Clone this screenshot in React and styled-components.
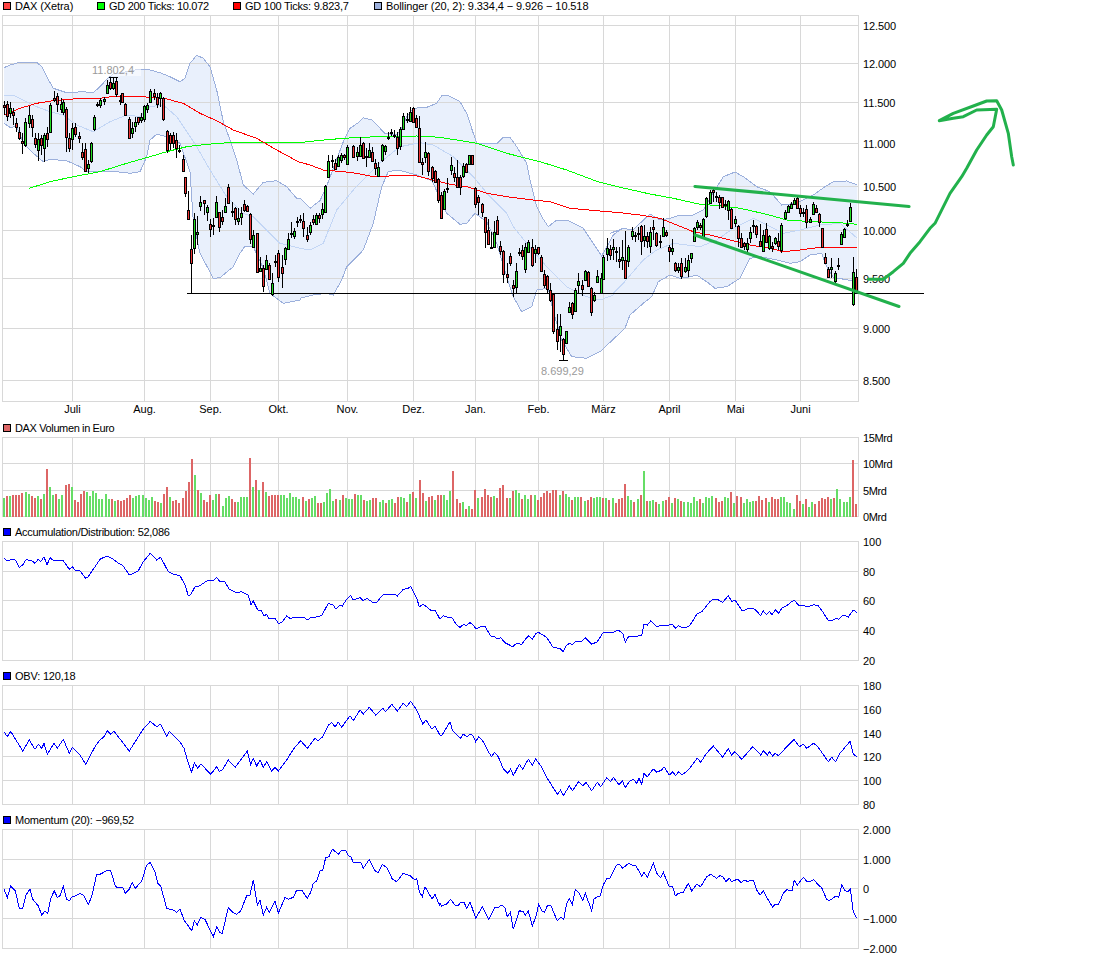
import React from "react";
import styled, { createGlobalStyle } from "styled-components";

const Global = createGlobalStyle`
  html, body { margin: 0; padding: 0; background: #fff; }
  #root { width: 1095px; height: 958px; overflow: hidden; }
`;

const FONT = `"Liberation Sans", Arial, sans-serif`;
const Page = styled.main`display:flex;flex-direction:column;width:1095px;height:958px;background:#fff;font-family:${FONT};color:#000;`;
const Panel = styled.section`display:flex;flex-direction:column;flex:none;`;
const LegendRow = styled.header`display:flex;align-items:center;height:12px;padding:0 0 3px 3px;`;
const LegendItem = styled.div`display:flex;align-items:center;gap:4px;flex:none;width:${p => (p.$w ? p.$w + "px" : "auto")};font-size:11px;line-height:12px;white-space:nowrap;letter-spacing:${p => p.$ls || 0}px;`;
const Swatch = styled.span`display:block;width:6px;height:6px;border:1px solid #000;background:${p => p.$c};flex:none;`;
const Chart = styled.svg`display:block;flex:none;overflow:visible;`;
const Tick = styled.text`font-family:${FONT};font-size:11px;fill:#000;dominant-baseline:central;`;
const Note = styled.text`font-family:${FONT};font-size:11px;fill:#9a9a9a;`;

const GRID = "#d8d8d8";
const PLOT_L = 2, PLOT_R = 858;
const VX = [72, 144, 210, 278, 347, 413, 475, 538, 603, 669, 735, 800];
const MONTHS = ["Juli", "Aug.", "Sep.", "Okt.", "Nov.", "Dez.", "Jan.", "Feb.", "März", "April", "Mai", "Juni"];

const pts = (ox, oy, s) => s.trim().split(/\s+/).map(p => { const [x, y] = p.split(",").map(Number); return [ox + x / 3, oy + y / 3]; });
const str = a => a.map(([x, y]) => `${x.toFixed(1)},${y.toFixed(1)}`).join(" ");

function Grid({ ys, top, bottom }) {
  return (
    <g shapeRendering="crispEdges" stroke={GRID} strokeWidth="1" fill="none">
      {ys.map(y => <line key={y} x1={PLOT_L} x2={PLOT_R + 1} y1={y + 0.5} y2={y + 0.5} />)}
      {[PLOT_L, ...VX, PLOT_R].map(x => <line key={x} x1={x + 0.5} x2={x + 0.5} y1={top} y2={bottom + 1} />)}
    </g>
  );
}
function Ticks({ items, x = 863, ls = 0 }) {
  return items.map(([t, y]) => <Tick key={t} x={x} y={y + 0.5} letterSpacing={ls}>{t}</Tick>);
}

/* ---------- main price data, "x hi top bottom lo colour" ---------- */
const CANDLES = [
  [0, 0, `12 302 316 322 345 r,21 302 313 348 362 r,30 305 325 340 355 g,39 325 337 346 375 r,49 355 370 380 395 r,58 380 397 413 420 r,67 400 424 430 463 r,76 355 365 436 440 g,88 318 345 370 385 g,97 345 358 380 410 r,106 400 415 433 445 r,115 400 418 451 482 g,124 405 415 435 465 r,133 400 405 445 485 g,142 380 400 418 440 r,151 310 315 395 397 g,163 272 295 300 305 r,172 280 288 313 335 r,182 295 312 328 340 g,190 300 307 335 345 g,199 320 328 410 455 r,208 400 415 443 455 r,216 370 385 418 450 g,226 370 382 403 410 r,238 395 409 414 428 r,247 430 457 472 480 r,256 430 448 512 515 r,265 480 492 503 520 g,274 425 430 483 490 g,283 345 350 388 392 g,292 305 311 313 322 r,301 295 300 316 325 g,313 292 296 303 315 g,322 240 255 278 280 g,331 232 247 263 270 r,340 232 250 264 270 g,349 232 243 282 290 r,359 285 300 304 315 r,367 278 280 305 310 r,376 310 313 345 347 r,388 350 358 415 417 r,397 365 385 398 415 g,406 350 367 378 395 g,415 350 352 365 375 r,424 340 352 360 370 g,433 315 318 356 365 g,442 310 316 328 338 g,451 266 274 307 310 g,463 266 280 287 300 r,472 280 292 311 325 r,481 277 280 295 320 g,490 290 295 357 362 r,500 390 392 450 458 r,509 400 405 430 450 r,518 395 405 428 445 r,527 400 420 445 475 r,538 435 449 451 460 r,548 465 476 512 515 r,556 530 532 578 590 r`],
  [0, 180, `565 33 91 118 120 r,574 165 207 250 340 r,583 100 118 205 223 g,592 107 155 163 195 g,601 48 67 79 92 g,613 61 61 70 105 r,622 75 82 97 122 g,631 118 133 148 172 r,640 115 136 138 165 r,649 48 67 110 110 g,658 95 95 142 155 r,667 90 112 124 135 r,676 55 79 97 100 g,685 13 22 70 70 r,697 65 93 95 110 r,706 80 85 118 135 r,715 85 115 122 135 g,724 82 100 110 135 g,733 60 73 91 95 r,742 75 79 92 92 r,751 100 103 176 192 r,760 150 165 200 200 g,772 158 160 275 278 r,781 230 263 272 275 g,790 255 265 317 335 r,799 225 240 268 270 g,808 250 256 298 300 r,817 280 310 341 347 g,826 225 244 246 260 r,835 210 220 292 305 r,847 225 262 280 325 r,856 200 205 238 255 g,865 160 178 207 210 g,874 125 159 161 175 r,883 145 154 168 178 g,892 110 123 125 140 r`],
  [300, 180, `0 105 117 119 130 r,10 100 124 143 170 r,22 140 165 177 185 r,31 125 136 155 165 g,40 105 118 125 135 r,49 100 105 131 133 g,58 100 105 113 130 r,67 70 88 102 118 g,76 15 18 95 100 g`],
  [300, 0, `85 465 482 530 535 g,97 465 481 483 505 r,106 478 490 508 510 r,115 465 472 498 500 g,124 460 465 480 490 g,133 462 465 472 480 r,142 435 440 493 495 g,160 435 438 470 475 r,172 440 457 468 483 g,181 412 435 468 470 g,190 425 430 475 478 r,199 445 468 472 500 r,208 430 451 470 475 g,217 440 455 482 485 r,226 478 490 503 525 r,235 485 502 528 530 g,247 432 436 480 487 g,256 435 438 453 465 g,265 395 411 413 420 r,274 388 397 399 408 r,283 390 404 406 415 r,292 395 412 445 465 r,301 380 388 438 450 g,310 340 348 386 390 g,322 340 356 360 368 g,331 322 335 363 365 g,340 322 325 365 368 r,349 345 353 382 385 r,358 348 385 485 490 r,367 475 487 493 525 r,376 425 457 472 490 g,385 455 460 512 527 r,397 498 500 533 545 r,406 510 512 545 545 r,415 535 538 600 610 r,442 535 564 566 580 r,452 470 496 510 525 g,461 500 520 530 545 r,472 480 530 562 565 r,481 525 532 562 585 r,490 490 498 528 535 g,499 488 492 517 520 r,508 466 466 493 495 g,517 466 466 493 495 r,526 560 563 613 625 r`],
  [300, 180, `424 35 44 115 118 r,433 28 32 88 90 g,535 45 50 67 105 r,547 70 72 95 110 r,556 110 112 157 205 r,565 118 150 193 195 r,574 155 202 204 205 r,583 122 157 200 205 g,592 108 121 163 165 r,601 183 198 212 225 r,610 210 214 281 308 r,622 250 282 290 310 r,631 218 228 248 258 r,640 300 315 325 350 r,649 250 273 322 340 g,658 205 217 219 228 r,667 195 210 228 240 r,676 190 202 266 278 g,685 180 187 215 220 g,697 178 202 255 260 r,706 195 207 218 250 g,715 200 202 220 225 r,724 225 230 272 275 r,733 270 283 314 325 r,742 285 288 328 340 r,751 310 331 360 365 r,760 340 342 452 462 r,772 402 447 482 510 r,781 402 438 465 515 g,790 475 477 521 540 r,799 452 454 490 492 g,808 365 382 395 400 g,817 365 370 403 418 r,826 325 331 392 395 g,835 280 304 316 340 g,847 300 316 328 347 r,856 270 273 301 303 g,865 272 277 319 322 r,874 322 324 395 408 r,883 335 345 360 365 g,892 270 289 307 310 g`],
  [600, 70, `3 610 625 670 672 g,10 555 562 628 630 g,22 504 534 552 574 g,31 525 536 554 570 r,40 508 532 538 570 g,49 530 544 546 575 r,58 530 568 572 595 r,67 510 560 570 600 g,76 482 570 625 625 r,85 525 530 573 590 g,97 470 484 497 510 g,106 485 496 498 515 r,115 470 488 490 510 r,124 465 468 512 555 r,133 465 497 510 530 g,142 485 497 513 535 r,151 470 485 528 550 g,160 450 470 478 510 r,169 485 490 525 530 r,181 495 512 514 535 r,190 445 470 497 500 g,199 480 485 495 500 r,208 525 530 542 575 r,217 508 533 542 555 g,226 575 580 600 605 r,235 580 590 600 610 g,244 565 580 617 628 r,256 565 590 602 610 g,265 555 570 600 620 g,274 548 550 563 580 g,283 470 475 512 515 g,292 450 457 472 480 g,301 460 464 472 480 r,310 445 448 500 500 g,319 380 385 438 445 g,331 360 365 398 400 g,340 350 360 366 395 r,349 365 379 381 395 r,358 375 380 395 418 r,367 380 382 410 415 r,376 390 402 404 420 r,385 390 393 420 450 g,394 415 418 473 475 r,406 437 447 458 470 g,415 465 468 503 530 r,424 490 503 530 535 r,433 515 520 527 540 r,442 505 520 538 545 g,451 470 487 503 520 g,460 450 466 468 490 r,469 465 467 492 505 r,481 462 512 527 530 r,490 480 495 543 545 g,499 460 478 515 520 r,508 495 498 535 540 g,517 515 527 535 545 r,526 500 505 518 525 g,535 490 513 527 540 r,544 460 465 540 548 g,556 420 427 445 450 g,565 405 408 427 428 g,574 397 403 414 415 g,583 385 390 403 405 g,592 382 385 413 415 r,601 405 415 428 440 r,610 415 427 429 440 r,619 405 418 457 473 r,631 440 447 455 458 g,640 395 403 432 435 g,649 405 415 425 430 r,658 430 433 457 470 r,667 475 475 530 535 r,676 550 562 580 582 r,685 590 598 620 622 r,694 565 592 598 625 g,706 603 610 633 640 g,715 565 585 587 600 r,724 485 492 523 525 g,733 475 477 500 503 g,742 450 461 463 470 r,751 398 412 452 455 g,760 562 607 703 707 g,769 597 620 660 670 r`],
];
const candles = CANDLES.flatMap(([ox, oy, s]) => s.split(",").map(r => {
  const [x, h, t, b, l, c] = r.trim().split(" ");
  const Y = v => Math.round(oy + Number(v) / 3);
  return { x: Math.round(ox + Number(x) / 3), h: Y(h), t: Y(t), b: Y(b), l: Y(l), c };
}));

const UPPER = [
  ...pts(0, 0, "12,203 30,195 60,187 110,187 125,200 140,230 160,265 200,278 250,275 280,278 300,260 320,238 340,222 380,215 420,207 450,210 480,218 510,230 540,245 555,235 570,190 590,166 610,175 630,200 650,270 670,365 690,420 710,480 730,555 760,582 790,547 830,542 860,560 890,595"),
  ...pts(300, 180, "0,55 30,85 60,62 75,30 85,5"),
  ...pts(300, 0, "130,425 150,385 175,368 190,353 215,360 240,385 255,400 290,405 305,385 320,350 340,325 380,322 410,310 425,287 445,287 480,305 500,340 520,400 530,430 590,432 610,412 630,412 650,440 680,490 690,540 710,620"),
  ...pts(300, 180, "725,110 745,140 770,120 800,120 850,145 880,190 905,228 940,165 960,150"),
  ...pts(600, 70, "30,490 70,475 100,480 120,460 150,432 180,450 210,445 240,435 280,435 310,420 330,385 370,320 405,306 430,320 470,350 510,365 545,405 590,400 640,375 675,350 700,335 740,333 772,345"),
];
const LOWER = [
  ...pts(0, 0, "12,370 30,382 50,380 70,430 100,460 130,485 150,478 200,482 240,500 260,515 300,515 350,515 390,520 420,515 440,470 450,420 470,403 500,410 540,430 570,515"),
  ...pts(0, 180, "580,125 600,220 640,295 660,293 700,260 720,220 735,198 760,200 790,265 810,340 850,370 900,360"),
  ...pts(300, 180, "0,355 40,345 80,340 100,345 125,300 140,260 190,210 220,130 245,20"),
  ...pts(300, 0, "265,515 295,510 350,525 390,540"),
  ...pts(300, 180, "395,0 440,100 480,133 500,130 525,100 560,125 590,190 620,290 640,350 665,395 695,380 710,330 745,325 760,395 785,480 815,530 860,535 900,515"),
  ...pts(600, 70, "75,775 90,735 130,700 155,680 175,635 210,615 240,625 265,622 290,615 320,635 345,655 380,650 420,625 450,565 480,560 530,570 570,580 600,575 630,555 665,550 680,590 700,622 755,632 772,632"),
];
const MID = [
  ...pts(0, 0, "12,285 40,285 70,300 110,320 150,335 190,345 230,375 280,395 330,365 380,345 420,350 450,320 490,315 530,350 590,440 630,510 680,590 730,640"),
  ...pts(0, 180, "760,110 840,190 900,205"),
  ...pts(300, 180, "0,205 30,210 70,190 110,90 160,30 190,0"),
  ...pts(300, 0, "250,480 300,440 360,428 400,435 460,470 520,530 570,590 620,640"),
  ...pts(300, 180, "640,140 680,190 740,260 800,320 860,350 900,360 940,345"),
  ...pts(600, 70, "40,670 70,640 130,570 170,540 220,520 300,530 350,510 400,475 460,445 500,465 550,490 600,480 660,465 720,460 772,505"),
];
const GD100 = [
  ...pts(0, 0, "12,345 60,325 110,310 160,302 220,297 300,295 350,288 400,288 450,292 500,297 550,310 600,340 650,362 700,390 770,415 830,450 895,485"),
  ...pts(300, 0, "30,495 70,510 130,515 170,520 220,530 290,527 350,528 400,540 450,553 500,560 560,580 620,590 700,600 750,605 810,625 890,632"),
  ...pts(600, 70, "60,428 120,435 180,445 230,465 280,485 330,495 390,510 450,525 510,535 550,545 600,540 660,532 772,533"),
];
const GD200 = [
  ...pts(0, 0, "88,565 150,545 220,530 300,515 380,490 450,470 500,455 560,440 620,433 700,427 800,428 895,428"),
  ...pts(300, 0, "50,422 130,415 230,410 350,408 420,412 530,430 620,460 720,485 800,510 890,544"),
  ...pts(600, 70, "60,352 150,372 220,385 300,403 360,407 420,415 500,433 560,450 640,455 720,458 772,463"),
];
const ARROW = pts(600, 70, "805,628 850,628 880,605 910,580 930,550 960,515 990,475 1005,460 1020,430 1050,370 1085,320 1100,295 1130,240 1160,195 1180,170 1190,118 1130,120 1090,140 1060,145 1018,152 1060,130 1120,108 1160,93 1190,92 1205,120 1225,190 1235,260 1240,285");

/* ---------- volume: c + bar top in 3x units ---------- */
const VOL_L = "g234 r228 g228 r225 r225 r225 r219 g216 g222 r228 r234 g228 r237 g222 r147 g201 g225 r222 g237 g225 r195 r192 g201 r240 r246 r222 r213 g216 g228 g213 g219 g237 g237 g222 g237 r237 g243 r240 r243 r240 r234 r225 g234 g228 g225 g225 g234 g240 g231 r243 r246 g249 r222 r201 g231 r243 r240 r249 r234 r213 r186 r117 g165 r210 g219 r240 r246 r225 g240 g222 r222 g258 g234 g228 r237 r246 g246 g231 g231 g231 r114 g201 r180 g210 r186 g216 r228 r225 r225 r225 g225 g225 g234 g219 g231 g231 g237 r231 g243 r237 g234 g228 r249 r249 g246 g219 g207 g243 r237 g240 r225 g234 g237 g237 r222 g225 g225 r240 g243 g240 r234 r234 g246 g240 r249 g240 g237 r249 r231 g231 g234 r246 g222 r216 g234 r180 r219 g243 r231 r228 g240 r225";
const VOL_R = "r225 g225 g240 g213 r153 r237 r249 g246 r267 g258 r267 r210 g234 r231 r207 r225 r231 g228 r234 r204 r195 r234 g234 r213 g210 g219 r237 g225 g237 r225 g225 r240 r231 r219 r213 r219 r210 r210 g225 r213 g222 g231 r240 g231 g231 r231 g243 r240 r231 g234 g231 g231 r234 g234 r240 g234 r250 r237 r234 r192 g228 g240 r246 g237 r225 g153 r243 g243 g240 r246 g252 g243 r240 r231 g249 r234 g237 r243 g246 g246 g249 g231 g243 r237 g249 g231 g234 g228 r234 r246 r243 g231 g234 r216 g249 r228 r231 g249 g237 g246 g243 r243 r228 r240 r234 g246 r231 r237 r237 g231 g231 g246 g249 g267 r225 r243 g252 r237 g261 g246 r252 r243 r234 r237 r231 g237 r234 g207 g237 g246 g246 g231 r120 r252";
const volBars = (s, x0, x1) => {
  const a = s.split(" ");
  return a.map((t, i) => ({ x: Math.round(x0 + (x1 - x0) * i / (a.length - 1)), c: t[0], top: 420 + Number(t.slice(1)) / 3 }));
};
const VOLS = [...volBars(VOL_L, 3, 437), ...volBars(VOL_R, 440, 855)];

const AD = [...pts(0, 530, "12,85 22,93 35,88 46,90 58,112 68,105 78,89 95,92 105,100 115,88 122,95 132,80 141,105 150,83 162,93 190,92 208,118 217,110 225,120 240,122 257,145 265,140 285,110 300,88 320,78 340,88 355,100 368,106 388,135 400,130 415,122 430,95 451,70 470,90 482,82 505,125 520,132 540,137 555,165 565,197 572,194 585,170 595,170 622,152 640,152 650,142 660,155 675,156 688,178 710,188 725,185 745,195 753,225 760,213 773,240 785,243 792,258 800,253 808,267 825,265 835,280 845,278 860,258 872,267 880,262 912,262 922,270 932,263 945,262 965,257 985,220 1000,225 1008,238 1018,227 1027,228 1042,205 1052,197 1060,210 1080,203 1090,212 1100,205 1118,217 1130,217 1148,195 1160,192 1182,192 1192,198 1210,178 1222,176 1232,170 1250,205 1258,230 1270,223 1295,243 1305,240 1320,268"),
  ...pts(440, 530, "0,268 10,257 25,262 35,262 50,285 60,292 70,284 80,286 90,278 100,285 108,297 125,289 135,289 152,318 162,319 172,326 182,323 195,338 218,350 230,340 245,343 265,317 277,328 288,310 295,307 320,322 340,353 360,355 370,365 380,345 390,340 397,345 408,333 425,335 435,323 455,343 472,335 490,307 520,307 535,300 548,310 556,337 566,319 590,319 605,315 612,283 622,285 632,273 650,290 668,285 680,288 690,283 698,284 706,295 716,287 728,293 745,290 755,278 770,253 785,245 810,215 820,208 832,208 848,217 865,197 876,215 885,210 905,240 915,240 925,235 940,235 950,243 962,257 970,243 980,254 988,244 996,254 1006,240 1016,250 1026,233 1040,227 1055,215 1063,211 1075,225 1085,225 1100,230 1110,228 1122,224 1135,227 1148,245 1165,272 1175,272 1188,265 1196,268 1210,255 1225,261 1240,240 1250,247")];
const OBV = [...pts(0, 530, "12,605 22,620 32,604 48,630 68,663 88,630 105,658 115,643 125,655 132,640 142,673 162,640 172,655 190,628 208,670 217,652 240,675 257,703 285,650 300,630 312,620 322,603 332,613 342,604 388,663 430,597 451,574 470,590 482,582 500,620 508,604 540,635 552,655 565,700 575,727 583,698 593,715 603,702 632,733 650,710 658,725 668,718 685,690 706,712 742,663 752,703 760,685 770,708 780,690 790,712 800,695 815,723 825,712 835,723 860,690 880,658 902,632 922,655 945,625 955,632 968,620 985,585 995,578 1005,590 1015,577 1025,592 1050,557 1060,572 1080,540 1090,552 1108,532 1127,555 1148,535 1157,545 1175,523 1192,543 1210,520 1220,530 1232,514 1250,540 1268,582 1278,570 1296,598 1305,588 1318,612"),
  ...pts(440, 530, "0,615 5,617 30,575 38,603 62,625 70,612 80,620 92,612 100,618 107,635 116,620 130,635 145,665 155,680 163,667 175,680 190,717 203,730 212,717 220,737 238,703 248,717 265,688 277,705 287,687 305,712 322,745 352,793 362,780 370,797 388,768 398,782 415,755 428,767 438,757 455,782 472,757 482,770 500,743 512,755 520,742 537,765 547,752 556,773 570,752 580,748 590,760 597,745 605,762 612,730 622,740 640,717 650,727 665,720 672,710 688,735 698,725 707,737 716,725 726,735 745,720 760,700 772,685 782,697 798,672 820,648 848,682 865,655 875,675 885,665 905,688 938,650 962,675 970,662 982,675 988,665 998,678 1005,670 1015,677 1062,628 1078,650 1090,643 1100,655 1120,640 1132,648 1165,695 1175,682 1187,695 1200,670 1230,634 1240,672 1250,680")];
const MOM = [...pts(0, 805, "12,252 22,278 32,243 46,258 58,310 68,310 78,270 90,252 98,283 115,303 125,330 135,318 143,325 152,280 163,258 172,277 180,272 190,243 200,283 208,287 218,273 225,273 240,265 250,270 265,298 275,275 290,208 300,208 320,197 332,197 345,240 350,247 368,247 376,265 388,252 397,232 406,250 425,228 440,180 451,172 465,200 473,235 482,243 500,310 520,315 530,322 540,312 552,345 575,377 583,347 592,360 602,337 615,343 640,395 650,365 660,383 667,385 685,308 700,323 710,328 722,318 740,272 750,270 760,225 772,300 780,285 790,330 800,307 808,322 825,287 835,325 855,277 865,283 880,277 890,255 905,255 922,280 932,262 940,235 950,228 960,198 968,195 977,158 987,155 997,132 1015,148 1025,135 1037,135 1045,152 1052,155 1060,172 1082,172 1090,190 1108,163 1125,197 1135,203 1147,178 1162,190 1177,222 1190,230 1210,205 1230,212 1245,225 1250,220 1258,260 1267,275 1275,245 1288,268 1296,282 1305,268 1318,300"),
  ...pts(440, 805, "0,295 5,303 20,297 32,283 45,300 53,303 62,292 72,292 80,310 90,290 107,340 127,305 146,343 165,307 175,307 185,300 195,310 202,335 211,322 220,373 238,317 250,320 256,330 265,318 277,362 287,337 296,298 306,318 313,322 322,303 332,300 352,348 362,337 371,343 380,295 388,280 397,298 406,254 418,265 428,287 436,265 455,317 462,282 472,275 480,273 490,240 500,220 510,220 530,180 538,178 548,190 566,175 575,180 587,181 605,213 612,202 622,217 640,175 650,205 662,218 670,202 688,245 698,245 706,273 715,265 730,262 745,235 755,258 770,238 782,245 800,215 812,208 830,220 840,212 850,217 858,230 868,220 875,230 893,222 903,233 912,225 922,229 940,226 950,255 960,270 970,258 985,285 998,307 1005,298 1016,297 1030,265 1040,254 1056,257 1063,226 1072,240 1090,217 1100,229 1112,229 1122,224 1135,240 1145,248 1160,283 1168,287 1188,273 1196,277 1205,240 1215,257 1224,260 1231,252 1240,320 1250,340")];

const viewOf = (top, h) => ({ width: 1095, height: h, viewBox: `0 ${top} 1095 ${h}` });

function Legend({ items }) {
  return (
    <LegendRow>
      {items.map(([c, t, w, ls]) => <LegendItem key={t} $w={w} $ls={ls}><Swatch $c={c} />{t}</LegendItem>)}
    </LegendRow>
  );
}

function LineChart({ top, height, ys, bottom, labels, data }) {
  return (
    <Chart {...viewOf(top, height)}>
      <Grid ys={ys} top={top} bottom={bottom} />
      <polyline points={str(data)} fill="none" stroke="#0000ff" strokeWidth="1" shapeRendering="crispEdges" />
      <Ticks items={labels} />
    </Chart>
  );
}

function PriceChart() {
  const ys = [15, 25, 63, 102, 143, 186, 230, 278, 328, 380, 401];
  return (
    <Chart {...viewOf(15, 407)}>
      <polygon points={str([...UPPER, ...[...LOWER].reverse()])} fill="#e9f0fc" />
      <Grid ys={ys} top={15} bottom={401} />
      <g fill="none" shapeRendering="crispEdges">
        <polyline points={str(UPPER)} stroke="#9cb0dc" />
        <polyline points={str(LOWER)} stroke="#9cb0dc" />
        <polyline points={str(MID)} stroke="#c3d6f5" />
        <polyline points={str(GD200)} stroke="#00ff00" />
        <polyline points={str(GD100)} stroke="#ff0000" />
      </g>
      <g shapeRendering="crispEdges">
        <line x1="187" x2="924" y1="293.5" y2="293.5" stroke="#000" />
        <line x1="109" x2="118" y1="77.5" y2="77.5" stroke="#000" />
        <line x1="559" x2="568" y1="360.5" y2="360.5" stroke="#000" />
        {candles.map((k, i) => (
          <g key={i}>
            <line x1={k.x + 0.5} x2={k.x + 0.5} y1={k.h} y2={k.l} stroke="#000" />
            <rect x={k.x - 0.5} y={k.t + 0.5} width="2" height={Math.max(k.b - k.t, 1)} fill={k.c === "g" ? "#22dd22" : "#ee3333"} stroke="#000" />
          </g>
        ))}
      </g>
      <rect x="91" y="65" width="50" height="11" fill="#fff" fillOpacity=".55" />
      <Note x="92" y="74">11.802,4</Note>
      <rect x="539" y="365" width="48" height="11" fill="#fff" fillOpacity=".55" />
      <Note x="541" y="375">8.699,29</Note>
      <Ticks items={[["12.500", 25], ["12.000", 63], ["11.500", 102], ["11.000", 143], ["10.500", 186], ["10.000", 230], ["9.500", 278], ["9.000", 328], ["8.500", 380]]} ls={-0.1} />
      {MONTHS.map((m, i) => <Tick key={m} x={VX[i] + 0.5} y={409} textAnchor="middle">{m}</Tick>)}
      <g fill="none" stroke="#22b14c" strokeLinecap="round" strokeLinejoin="round">
        <line x1="695" y1="186.5" x2="909" y2="206.5" strokeWidth="3.2" />
        <line x1="695" y1="235" x2="899" y2="306.5" strokeWidth="3" />
        <polyline points={str(ARROW)} strokeWidth="3" />
      </g>
    </Chart>
  );
}

function VolumeChart() {
  return (
    <Chart {...viewOf(437, 89)}>
      <Grid ys={[437, 463, 490, 516]} top={437} bottom={516} />
      <g shapeRendering="crispEdges">
        {VOLS.map((b, i) => <rect key={i} x={b.x} y={Math.round(b.top)} width="2" height={517 - Math.round(b.top)} fill={b.c === "g" ? "#66dd66" : "#dd6666"} />)}
      </g>
      <Ticks items={[["15Mrd", 437], ["10Mrd", 463], ["5Mrd", 490], ["0Mrd", 516]]} ls={-0.4} />
    </Chart>
  );
}

export default function App() {
  return (
    <Page>
      <Global />
      <Panel>
        <Legend items={[
          ["#ff4444", "DAX (Xetra)", 94, -0.1],
          ["#00ff00", "GD 200 Ticks: 10.072", 136, -0.3],
          ["#ff0000", "GD 100 Ticks: 9.823,7", 141, -0.25],
          ["#9cb0dc", "Bollinger (20, 2): 9.334,4 − 9.926 − 10.518", undefined, -0.1],
        ]} />
        <PriceChart />
      </Panel>
      <Panel>
        <Legend items={[["#dd6666", "DAX Volumen in Euro", undefined, -0.37]]} />
        <VolumeChart />
      </Panel>
      <Panel>
        <Legend items={[["#0000ff", "Accumulation/Distribution: 52,086", undefined, -0.28]]} />
        <LineChart top={541} height={129} ys={[541, 571, 600, 630, 660]} bottom={660} data={AD}
          labels={[["100", 541], ["80", 571], ["60", 600], ["40", 630], ["20", 660]]} />
      </Panel>
      <Panel>
        <Legend items={[["#0000ff", "OBV: 120,18", undefined, -0.2]]} />
        <LineChart top={685} height={129} ys={[685, 709, 733, 756, 780, 804]} bottom={804} data={OBV}
          labels={[["180", 685], ["160", 709], ["140", 733], ["120", 756], ["100", 780], ["80", 804]]} />
      </Panel>
      <Panel>
        <Legend items={[["#0000ff", "Momentum (20): −969,52", undefined, -0.22]]} />
        <LineChart top={829} height={129} ys={[829, 859, 888, 918, 948]} bottom={948} data={MOM}
          labels={[["2.000", 829], ["1.000", 859], ["0", 888], ["−1.000", 918], ["−2.000", 948]]} />
      </Panel>
    </Page>
  );
}
